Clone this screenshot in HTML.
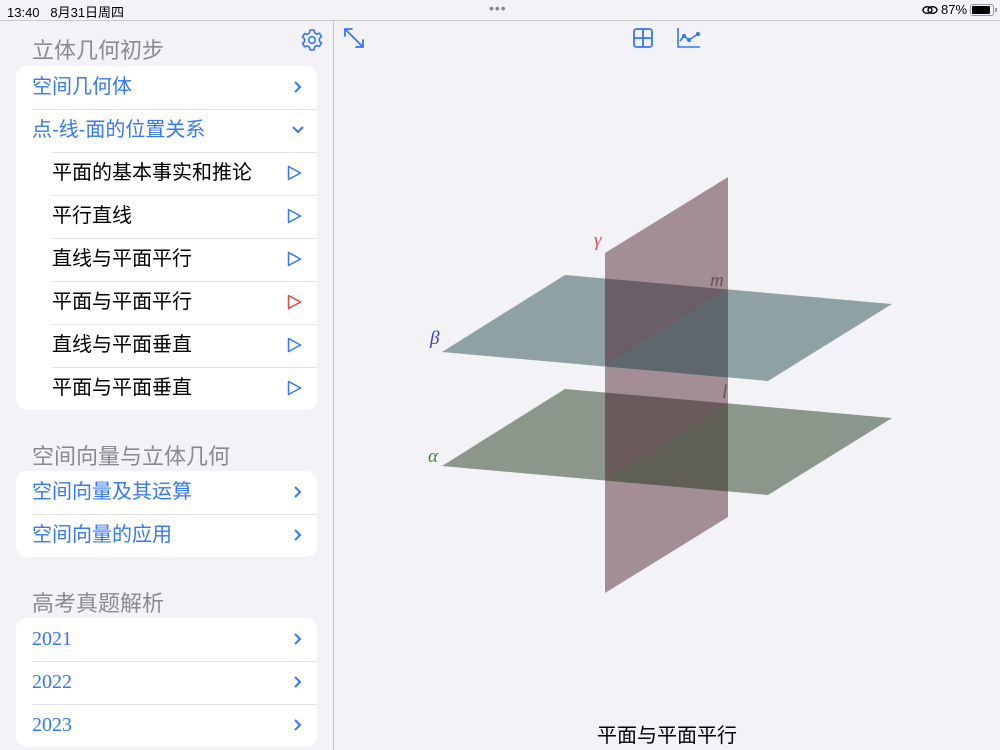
<!DOCTYPE html>
<html><head><meta charset="utf-8"><style>
*{margin:0;padding:0;box-sizing:border-box}
body{width:1000px;height:750px;background:#f2f2f7;font-family:"Liberation Sans","Noto Sans CJK SC",sans-serif;position:relative;overflow:hidden}
.abs{position:absolute}
.sb{top:0;left:0;width:1000px;height:21px;border-bottom:1px solid #c8c8cc;font-size:13px;color:#000}
.vd{left:333px;top:21px;width:1px;height:729px;background:#c8c8cc}
.hdr{left:32px;font-size:22px;color:#8a8a8e}
.card{left:16px;width:301px;background:#fff;border-radius:11px;overflow:hidden}
.row{position:relative;height:43px;line-height:42px;font-size:20px;color:#3478f6;padding-left:16px}
.row.sub{padding-left:36px;color:#000}
.row+.row::before{content:"";position:absolute;top:0;left:16px;right:0;height:1px;background:#e2e2e6}
.row.sub::before{left:36px!important}
.ch{position:absolute;right:14px;top:14px}
.yr{font-family:"Liberation Serif",serif}
</style></head><body>
<div class="abs sb">
<span class="abs" style="left:7px;top:2px">13:40&nbsp;&nbsp; 8月31日周四</span>
<span class="abs" style="left:489px;top:0px;font-size:14px;color:#888;letter-spacing:1px">•••</span>
<svg class="abs" style="left:922px;top:5px" width="16" height="10" viewBox="0 0 16 10"><ellipse cx="5.5" cy="5" rx="4.5" ry="3.3" fill="none" stroke="#000" stroke-width="1.4"/><ellipse cx="10.5" cy="5" rx="4.5" ry="3.3" fill="none" stroke="#000" stroke-width="1.4"/></svg>
<span class="abs" style="left:941px;top:2px">87%</span>
<div class="abs" style="left:970px;top:4px;width:24px;height:12px;border:1px solid #999;border-radius:3px;padding:1px"><div style="width:18px;height:8px;background:#000;border-radius:1px"></div></div>
<div class="abs" style="left:995px;top:8px;width:2px;height:4px;background:#999"></div>
</div>
<div class="abs vd"></div>
<svg class="abs" style="left:300px;top:28px" width="24" height="24" viewBox="0 0 24 24" fill="none" stroke="#3478f6" stroke-width="1.6"><path d="M10 2h4l.6 2.8 2.2 1.3 2.7-.9 2 3.4-2.1 1.9v2.6l2.1 1.9-2 3.4-2.7-.9-2.2 1.3L14 22h-4l-.6-2.8-2.2-1.3-2.7.9-2-3.4 2.1-1.9v-2.6L2.5 8.9l2-3.4 2.7.9 2.2-1.3z" stroke-linejoin="round"/><circle cx="12" cy="12" r="3.3"/></svg>
<svg class="abs" style="left:343px;top:27px" width="22" height="22" viewBox="0 0 22 22" fill="none" stroke="#3478f6" stroke-width="1.8" stroke-linecap="round"><path d="M2 2l18 18M2 2v7M2 2h7M20 20v-7M20 20h-7"/></svg>
<svg class="abs" style="left:633px;top:28px" width="20" height="20" viewBox="0 0 20 20" fill="none" stroke="#3478f6" stroke-width="1.8"><rect x="1" y="1" width="18" height="18" rx="2.5"/><path d="M10 1v18M1 10h18"/></svg>
<svg class="abs" style="left:677px;top:27px" width="24" height="22" viewBox="0 0 24 22" fill="none" stroke="#3478f6" stroke-width="1.6" stroke-linejoin="round"><path d="M1 1v19h22"/><path d="M3 14l4-5 5 4 9-6"/><circle cx="7" cy="9" r="1.3" fill="#3478f6"/><circle cx="12" cy="13" r="1.3" fill="#3478f6"/><circle cx="21" cy="7" r="1.3" fill="#3478f6"/></svg>

<div class="abs hdr" style="top:33px">立体几何初步</div>
<div class="abs card" style="top:66px">
<div class="row">空间几何体<svg class="ch" width="10" height="14" viewBox="0 0 10 14"><path d="M2 2l5 5-5 5" fill="none" stroke="#3478f6" stroke-width="2"/></svg></div>
<div class="row">点-线-面的位置关系<svg class="ch" style="top:16px;right:12px" width="14" height="10" viewBox="0 0 14 10"><path d="M2 2l5 5 5-5" fill="none" stroke="#3478f6" stroke-width="2"/></svg></div>
<div class="row sub">平面的基本事实和推论<svg class="ch" style="right:15px;top:13px" width="15" height="16" viewBox="0 0 15 16"><path d="M1.5 1.5l12 6.5-12 6.5z" fill="none" stroke="#3478f6" stroke-width="1.5" stroke-linejoin="round"/></svg></div>
<div class="row sub">平行直线<svg class="ch" style="right:15px;top:13px" width="15" height="16" viewBox="0 0 15 16"><path d="M1.5 1.5l12 6.5-12 6.5z" fill="none" stroke="#3478f6" stroke-width="1.5" stroke-linejoin="round"/></svg></div>
<div class="row sub">直线与平面平行<svg class="ch" style="right:15px;top:13px" width="15" height="16" viewBox="0 0 15 16"><path d="M1.5 1.5l12 6.5-12 6.5z" fill="none" stroke="#3478f6" stroke-width="1.5" stroke-linejoin="round"/></svg></div>
<div class="row sub">平面与平面平行<svg class="ch" style="right:15px;top:13px" width="15" height="16" viewBox="0 0 15 16"><path d="M1.5 1.5l12 6.5-12 6.5z" fill="none" stroke="#e8453c" stroke-width="1.5" stroke-linejoin="round"/></svg></div>
<div class="row sub">直线与平面垂直<svg class="ch" style="right:15px;top:13px" width="15" height="16" viewBox="0 0 15 16"><path d="M1.5 1.5l12 6.5-12 6.5z" fill="none" stroke="#3478f6" stroke-width="1.5" stroke-linejoin="round"/></svg></div>
<div class="row sub">平面与平面垂直<svg class="ch" style="right:15px;top:13px" width="15" height="16" viewBox="0 0 15 16"><path d="M1.5 1.5l12 6.5-12 6.5z" fill="none" stroke="#3478f6" stroke-width="1.5" stroke-linejoin="round"/></svg></div>
</div>

<div class="abs hdr" style="top:439px">空间向量与立体几何</div>
<div class="abs card" style="top:471px">
<div class="row">空间向量及其运算<svg class="ch" width="10" height="14" viewBox="0 0 10 14"><path d="M2 2l5 5-5 5" fill="none" stroke="#3478f6" stroke-width="2"/></svg></div>
<div class="row">空间向量的应用<svg class="ch" width="10" height="14" viewBox="0 0 10 14"><path d="M2 2l5 5-5 5" fill="none" stroke="#3478f6" stroke-width="2"/></svg></div>
</div>

<div class="abs hdr" style="top:586px">高考真题解析</div>
<div class="abs card" style="top:618px">
<div class="row yr">2021<svg class="ch" width="10" height="14" viewBox="0 0 10 14"><path d="M2 2l5 5-5 5" fill="none" stroke="#3478f6" stroke-width="2"/></svg></div>
<div class="row yr">2022<svg class="ch" width="10" height="14" viewBox="0 0 10 14"><path d="M2 2l5 5-5 5" fill="none" stroke="#3478f6" stroke-width="2"/></svg></div>
<div class="row yr">2023<svg class="ch" width="10" height="14" viewBox="0 0 10 14"><path d="M2 2l5 5-5 5" fill="none" stroke="#3478f6" stroke-width="2"/></svg></div>
</div>

<svg class="abs" style="left:0;top:0" width="1000" height="750" viewBox="0 0 1000 750">
<polygon points="605,253 728,177 728,517 605,593" fill="#a48e95"/>
<polygon points="442,352 565,275 892,304 768,381" fill="#8ea1a5"/>
<polygon points="605,278.5 728,289.5 605,366.5" fill="#6a5f66"/>
<polygon points="605,366.5 728,289.5 728,377.5" fill="#5f676e"/>
<polygon points="442,466 565,389 892,418 768,495" fill="#8b978b"/>
<polygon points="605,392.5 728,403.5 605,480.5" fill="#6a5a5b"/>
<polygon points="605,480.5 728,403.5 728,491.5" fill="#5f5f56"/>
<g font-family="Liberation Serif,serif" font-style="italic" font-size="19">
<text x="594" y="246" fill="#e0505a">γ</text>
<text x="430" y="344" fill="#3a3ae0">β</text>
<text x="428" y="462" fill="#3a8a2a">α</text>
<text x="710" y="286" fill="#6a4f48">m</text>
<text x="722" y="398" fill="#6a4f48">l</text>
</g>
</svg>
<div class="abs" style="left:334px;width:666px;top:719px;text-align:center;font-size:20px;color:#000">平面与平面平行</div>
</body></html>
